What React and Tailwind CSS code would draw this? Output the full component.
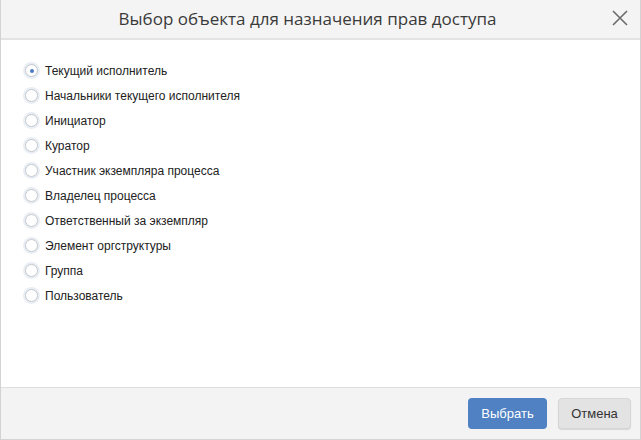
import React, { useState } from 'react';

const options = [
  'Текущий исполнитель',
  'Начальники текущего исполнителя',
  'Инициатор',
  'Куратор',
  'Участник экземпляра процесса',
  'Владелец процесса',
  'Ответственный за экземпляр',
  'Элемент оргструктуры',
  'Группа',
  'Пользователь',
];

const Radio = ({ checked }) => (
  <span className="w-[17px] h-[17px] rounded-full bg-[#e9eef4] flex items-center justify-center shrink-0">
    <span className="w-[13px] h-[13px] rounded-full bg-white border border-[#c4c8cc] flex items-center justify-center">
      {checked && <span className="w-[4px] h-[4px] rounded-full bg-[#4a7bc0]" />}
    </span>
  </span>
);

export default function App() {
  const [selected, setSelected] = useState(0);

  return (
    <div className="w-[641px] h-[440px] flex flex-col bg-white border-x border-b border-[#d3d3d3] font-['Liberation_Sans',Arial,sans-serif]">
      {/* Заголовок */}
      <div className="h-[40px] shrink-0 bg-[#f4f4f4] border-b-2 border-[#e3e3e3] flex items-center justify-center pr-[26px] relative">
        <h1 className="font-['Open_Sans',sans-serif] text-[17px] text-[#3a3a3a]">
          Выбор объекта для назначения прав доступа
        </h1>
        <button className="absolute right-[10px] top-[8px] text-[#6b6b6b]">
          <svg width="20" height="20" viewBox="0 0 20 20" fill="none" stroke="currentColor" strokeWidth="1.6">
            <path d="M3 3 L17 17 M17 3 L3 17" />
          </svg>
        </button>
      </div>

      {/* Список */}
      <div className="flex-1 pt-[18px] pl-[22px] flex flex-col">
        {options.map((label, i) => (
          <label
            key={label}
            onClick={() => setSelected(i)}
            className="h-[25px] flex items-center gap-[5px] cursor-pointer"
          >
            <Radio checked={selected === i} />
            <span className="text-[12px] text-[#222]">{label}</span>
          </label>
        ))}
      </div>

      {/* Подвал */}
      <div className="h-[52px] shrink-0 bg-[#f3f3f3] border-t border-[#dedede] flex items-start justify-end gap-[11px] pt-[10px] pr-[9px]">
        <button className="h-[31px] w-[79px] rounded-[4px] bg-[#4f81c3] text-white text-[13px]">
          Выбрать
        </button>
        <button className="h-[31px] w-[73px] rounded-[4px] bg-[#e3e3e3] border border-[#d6d6d6] shadow-[0_1px_1px_rgba(0,0,0,0.12)] text-[#333] text-[13px]">
          Отмена
        </button>
      </div>
    </div>
  );
}
